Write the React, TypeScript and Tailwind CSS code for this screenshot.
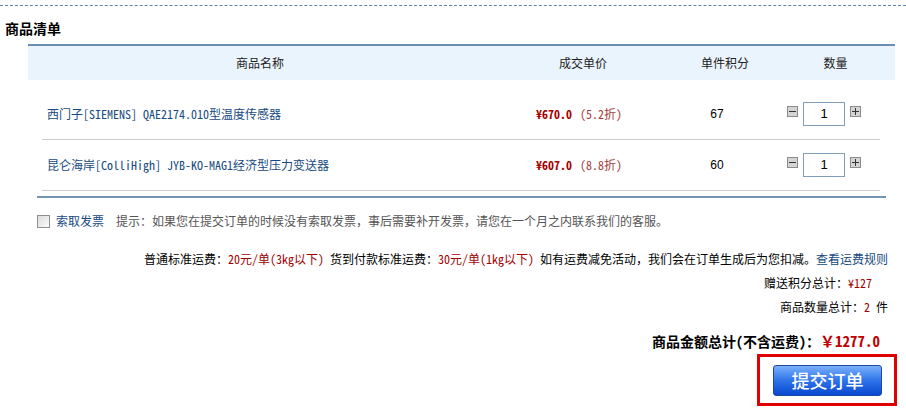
import React from "react";

type Item = {
  name: string;
  price: string;
  discount: string;
  points: string;
  qty: number;
};

const items: Item[] = [
  { name: "西门子[SIEMENS] QAE2174.010型温度传感器", price: "¥670.0", discount: "(5.2折)", points: "67", qty: 1 },
  { name: "昆仑海岸[ColliHigh] JYB-KO-MAG1经济型压力变送器", price: "¥607.0", discount: "(8.8折)", points: "60", qty: 1 },
];

const song = "font-['Noto_Sans_Mono_CJK_SC','Noto_Sans_CJK_SC','Liberation_Mono',monospace]";

function QtyButton({ sign }: { sign: "-" | "+" }) {
  return (
    <span className="mt-[4px] flex h-[11px] w-[11px] items-center justify-center border border-[#8c8c8c] bg-[#d4d4d4]">
      <svg width="7" height="7" viewBox="0 0 7 7">
        <rect x="0" y="3" width="7" height="1" fill="#333" />
        {sign === "+" ? <rect x="3" y="0" width="1" height="7" fill="#333" /> : null}
      </svg>
    </span>
  );
}

export default function App() {
  return (
    <div className={`h-[411px] w-[906px] overflow-hidden bg-white text-[12px] text-[#222] ${song}`}>
      <div className="mt-[5px] border-t border-dashed border-[#5f83a6]" />
      <h2 className="ml-[5px] mt-[14px] text-[14px] font-bold leading-[16px] text-black">商品清单</h2>

      <div className="ml-[28px] mt-[8px] w-[867px]">
        <div className="flex h-[36px] items-center border-t-2 border-[#6b8fb3] bg-[#eaf4fd] text-[#222]">
          <div className="w-[464px] text-center">商品名称</div>
          <div className="w-[182px] text-center">成交单价</div>
          <div className="w-[102px] text-center">单件积分</div>
          <div className="w-[119px] text-center">数量</div>
        </div>

        <div className="ml-[14px] w-[838px]">
          {items.map((item, i) => (
            <div
              key={item.name}
              className={`flex items-center border-b border-[#cccccc] ${i === 0 ? "h-[60px] pt-[8px]" : "h-[51px]"}`}
            >
              <div className="w-[450px] pl-[5px] text-[#164a80]">{item.name}</div>
              <div className="flex w-[174px] justify-center gap-[8px]">
                <span className="font-bold text-[#a30000]">{item.price}</span>
                <span className="text-[#a33a3a]">{item.discount}</span>
              </div>
              <div className="w-[102px] text-center font-['Liberation_Sans',sans-serif] text-black">{item.points}</div>
              <div className="flex w-[112px] items-start justify-center gap-[5px]">
                <QtyButton sign="-" />
                <div className="flex h-[24px] w-[42px] items-center justify-center border border-[#7f9db9] font-['Liberation_Sans',sans-serif] text-[13px] text-black">
                  {item.qty}
                </div>
                <QtyButton sign="+" />
              </div>
            </div>
          ))}
        </div>
        <div className="ml-[9px] mt-[5px] w-[849px] border-t-2 border-[#7393b3]" />
      </div>

      <div className="ml-[37px] mt-[16px] flex h-[14px] items-center">
        <span className="h-[13px] w-[13px] border border-[#8f8f8f] bg-gradient-to-br from-[#dcdcdc] to-[#fbfbfb]" />
        <span className="ml-[6px] text-[#164a80]">索取发票</span>
        <span className="ml-[12px] text-[#555]">
          提示：如果您在提交订单的时候没有索取发票，事后需要补开发票，请您在一个月之内联系我们的客服。
        </span>
      </div>

      <div className="mr-[18px] mt-[22px] flex flex-col items-end gap-[6px] leading-[18px] text-black">
        <p>
          普通标准运费：<span className="text-[#a30000]">20元/单(3kg以下)</span> 货到付款标准运费：
          <span className="text-[#a30000]">30元/单(1kg以下)</span> 如有运费减免活动，我们会在订单生成后为您扣减。
          <span className="text-[#164a80]">查看运费规则</span>
        </p>
        <p className="mr-[16px]">
          赠送积分总计：<span className="text-[#a30000]">¥127</span>
        </p>
        <p>
          商品数量总计：<span className="text-[#a30000]">2</span> 件
        </p>
        <p className="mr-[8px] mt-[10px] text-[14px] font-bold">
          商品金额总计(不含运费)：<span className="text-[15px] text-[#c00000]">￥1277.0</span>
        </p>
      </div>

      <div className="mr-[9px] mt-[4px] flex justify-end">
        <div className="border-[3px] border-[#e00000] pb-[7px] pl-[13px] pr-[12px] pt-[8px]">
          <button
            type="button"
            className="flex h-[31px] w-[109px] items-center justify-center rounded-[3px] border border-[#1c4aa3] bg-gradient-to-b from-[#79b0fa] via-[#2f73ea] to-[#0a47d0] font-['Noto_Sans_CJK_SC',sans-serif] text-[18px] font-medium text-white"
          >
            提交订单
          </button>
        </div>
      </div>
    </div>
  );
}
